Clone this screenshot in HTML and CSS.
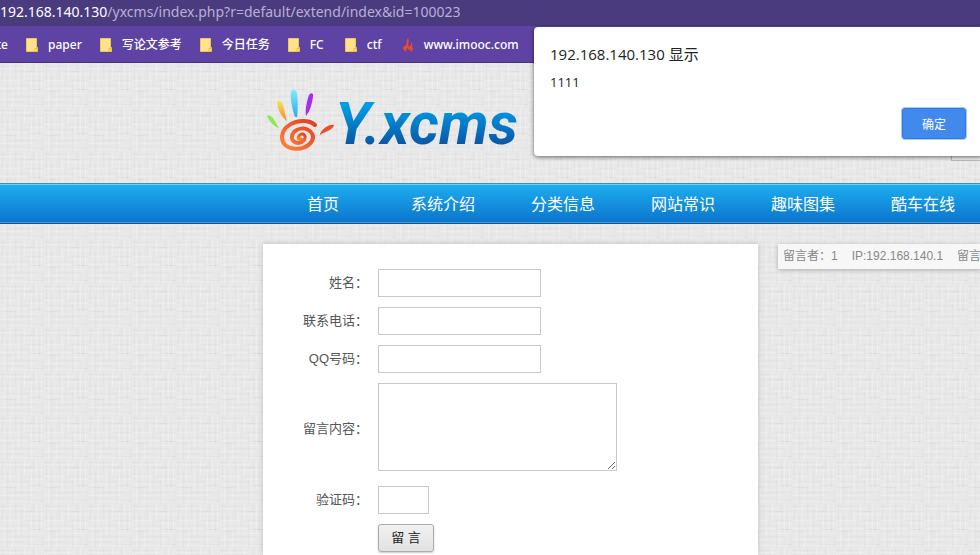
FILE: index.html
```html
<!DOCTYPE html>
<html lang="zh-CN">
<head>
<meta charset="utf-8">
<title>Yxcms</title>
<link rel="stylesheet" href="styles.css">
</head>
<body>
<svg class="defs" aria-hidden="true">
  <symbol id="folder" viewBox="0 0 12 14">
    <path d="M.5.5h10v9h1v4H.5z" fill="#ffe38c" stroke="#f0c94c"/>
    <path d="M9 13.500V10.500h2.500v3z" fill="#ffe38c" stroke="#e8bb3c"/>
  </symbol>
</svg>
<div class="chrome">
  <div class="address"><span class="host">192.168.140.130</span>/yxcms/index.php?r=default/extend/index&amp;id=100023</div>
  <nav class="bookmarks">
    <a class="cut" href="#">te</a>
    <a href="#"><svg class="icon"><use href="#folder"/></svg>paper</a>
    <a href="#"><svg class="icon"><use href="#folder"/></svg>写论文参考</a>
    <a href="#"><svg class="icon"><use href="#folder"/></svg>今日任务</a>
    <a href="#"><svg class="icon"><use href="#folder"/></svg>FC</a>
    <a href="#"><svg class="icon"><use href="#folder"/></svg>ctf</a>
    <a href="#"><svg class="icon" viewBox="0 0 12 14"><path d="M6 0c1 2 1 4 0 6l1 3 2-2V4c2 2 1 4 1 5l1 1c0 2-1 3-3 4l1-3-2 1-2-2-1 2 1 2C2 13 1 11 1 9c1 0 2-1 2-2l1 1C5 5 4 3 6 0z" fill="#f04a2c"/></svg>www.imooc.com</a>
  </nav>
</div>
<div class="site">
  <svg class="linen" aria-hidden="true">
    <pattern id="weave" width="44" height="44" patternUnits="userSpaceOnUse">
      <g stroke="#000" stroke-opacity=".025">
        <path d="M2.500 0v20M7.500 12v32M15.500 0v16M15.500 26v10M21.500 6v30M28.500 18v26M33.500 0v24M39.500 10v18M42.500 30v14"/>
        <path d="M0 3.500h22M10 8.500h34M0 14.500h14M24 17.500h20M4 22.500h26M0 28.500h16M30 26.500h14M8 33.500h30M0 39.500h24M28 41.500h16"/>
        <path d="M26 8.500h8M6 28.500h7M34 26.500h7"/>
      </g>
      <g stroke="#fff" stroke-opacity=".22">
        <path d="M4.500 10v34M10.500 0v24M12.500 28v16M18.500 8v24M24.500 0v18M31.500 10v34M36.500 0v30M41.500 4v22"/>
        <path d="M0 5.500h30M20 11.500h24M0 17.500h20M26 20.500h18M0 25.500h28M14 30.500h30M0 36.500h34M10 42.500h30"/>
      </g>
    </pattern>
    <rect width="100%" height="100%" fill="url(#weave)"/>
  </svg>
  <header class="header">
    <a class="logo" href="#">
      <svg class="hand" viewBox="0 0 68 64" aria-hidden="true">
        <defs>
          <linearGradient id="sun" x1="1" y1="0" x2="0" y2="1"><stop offset="0" stop-color="#e23c22"/><stop offset="1" stop-color="#ff8538"/></linearGradient>
          <linearGradient id="sky" x1="0" y1="0" x2="0" y2="1"><stop offset="0" stop-color="#7ceefa"/><stop offset="1" stop-color="#32a8ee"/></linearGradient>
          <linearGradient id="gold" x1="0" y1="0" x2="0" y2="1"><stop offset="0" stop-color="#f2e54c"/><stop offset="1" stop-color="#f58a38"/></linearGradient>
        </defs>
        <path d="M0 27c2-2 4 0 6 2l6 10c-4-1-9-5-12-12z" fill="#8fe94c"/>
        <path d="M10 13c2-2 5-1 6 3l4 16c-5-3-10-12-10-19z" fill="url(#gold)"/>
        <path d="M24 3c1-4 5-3 6 1 1 8 1 16 0 24h-2C25 20 23 9 24 3z" fill="url(#sky)"/>
        <path d="M42 6c2-3 5-2 4 2-1 7-3 14-7 19-1-7 1-15 3-21z" fill="#a52df0"/>
        <path d="M53 45c2-5 9-10 14-9 0 4-9 7-14 10z" fill="#e8502a"/>
        <g fill="none" stroke="url(#sun)" stroke-linecap="round">
          <path d="M48 36C40 28 16 32 15 48c0 15 24 15 30 4 5-10-10-17-18-9-7 8 4 15 10 8" stroke-width="4"/>
          <path d="M37 51c3-4-1-8-4-5-3 2-2 5 1 4" stroke-width="3"/>
        </g>
      </svg>
      <span class="wordmark">Y.xcms</span>
    </a>
    <input class="search" type="text" aria-label="搜索">
  </header>
  <nav class="menu">
    <a href="#">首页</a>
    <a href="#">系统介绍</a>
    <a href="#">分类信息</a>
    <a href="#">网站常识</a>
    <a href="#">趣味图集</a>
    <a href="#">酷车在线</a>
  </nav>
  <main class="content">
    <form class="panel">
      <label for="name">姓名：</label><input id="name" type="text">
      <label for="tel">联系电话：</label><input id="tel" type="text">
      <label for="qq">QQ号码：</label><input id="qq" type="text">
      <label for="message">留言内容：</label><textarea id="message"></textarea>
      <label for="code">验证码：</label><input id="code" class="short" type="text">
      <button class="submit" type="button">留 言</button>
    </form>
    <aside class="message"><span>留言者：1</span><span>IP:192.168.140.1</span><span>留言</span></aside>
  </main>
</div>
<div class="dialog" role="dialog" aria-labelledby="dialog-title">
  <h1 id="dialog-title">192.168.140.130 显示</h1>
  <p>1111</p>
  <button class="confirm" type="button">确定</button>
</div>
</body>
</html>
```
FILE: styles.css
```css
* { box-sizing: border-box; }

body {
  display: flex;
  flex-direction: column;
  position: relative;
  min-height: 100vh;
  margin: 0;
  overflow: hidden;
  font: 13px/20px "Liberation Sans", "Noto Sans CJK SC", sans-serif;
  color: #555;
}

a { color: inherit; text-decoration: none; }
.defs { position: absolute; width: 0; height: 0; }

/* Browser bars */
.chrome { font-family: "Noto Sans", "Noto Sans CJK SC", sans-serif; white-space: nowrap; }

.address {
  height: 26px;
  background: #4a3a7e;
  color: #b9b0d6;
  font-size: 14px;
  line-height: 24px;
}
.host { color: #fff; }

.bookmarks {
  display: flex;
  align-items: center;
  gap: 18px;
  height: 37px;
  padding-top: 1px;
  border-bottom: 1px solid #46327c;
  background: #5e43a5;
  color: #fff;
  font-size: 12px;
  font-weight: 500;
}
.bookmarks a { display: flex; align-items: center; gap: 10px; min-width: 39px; }
.bookmarks .cut { justify-content: flex-end; width: 8px; min-width: 0; }
.icon { width: 12px; height: 14px; }

/* Site */
.site {
  position: relative;
  z-index: 0;
  flex: 1;
  display: flex;
  flex-direction: column;
  background: #e8e8e8;
}

/* Linen texture behind the page, repeating every 44px */
.linen { position: absolute; z-index: -1; inset: 0; width: 100%; height: 100%; }

.header { display: flex; justify-content: space-between; height: 120px; padding-left: 267px; }
.logo { display: flex; align-items: flex-start; padding-top: 26px; }
.hand { width: 68px; height: 64px; }
.wordmark {
  padding-right: 8px;
  background: linear-gradient(#009ce8 25%, #0b4f9f 85%);
  background-clip: text;
  color: transparent;
  font: italic 700 59px/70px Roboto, sans-serif;
}
.search {
  width: 29px;
  height: 28px;
  margin-top: 70px;
  border: 1px solid #bbb;
  border-right: 0;
  background: #eee;
}

.menu {
  display: flex;
  height: 41px;
  padding-left: 263px;
  border-top: 1px solid #3b93b5;
  border-bottom: 1px solid #14568c;
  background: linear-gradient(#1eaef0, #0a74cb);
  box-shadow: inset 0 1px #6fd0ee, inset 0 -1px #3c9be0;
  color: #fff;
  font-size: 16px;
  line-height: 41px;
}
.menu a { flex: 0 0 120px; text-align: center; }

.content {
  flex: 1;
  display: grid;
  grid-template-columns: 495px 1fr;
  gap: 20px;
  padding: 20px 0 0 263px;
}

.panel {
  display: grid;
  grid-template-columns: 105px 1fr;
  grid-auto-rows: max-content;
  gap: 10px;
  align-items: center;
  justify-items: start;
  padding-top: 25px;
  background: #fff;
  box-shadow: 0 0 5px #bbb;
}
.panel label { justify-self: end; padding-bottom: 1px; }
.panel input, .panel textarea {
  width: 163px;
  height: 28px;
  margin: 0;
  border: 1px solid #c8c8c8;
  background: #fff;
}
.panel textarea { width: 239px; height: 88px; margin-bottom: 5px; }
.panel .short { width: 51px; }

.submit {
  grid-column: 2;
  width: 56px;
  height: 28px;
  padding: 0;
  border: 1px solid #aaa;
  border-radius: 3px;
  background: linear-gradient(#f1f1f1, #e2e2e2);
  box-shadow: 0 1px 2px #ccc;
  color: #222;
  font: inherit;
}

.message {
  align-self: start;
  display: flex;
  gap: 14px;
  height: 25px;
  padding-left: 5px;
  overflow: hidden;
  background: #f7f7f7;
  box-shadow: 0 1px 4px #aaa;
  color: #888;
  font-size: 12px;
  line-height: 24px;
  white-space: nowrap;
}
.message span { flex: none; }

/* Alert box */
.dialog {
  position: absolute;
  z-index: 1;
  top: 27px;
  right: -3px;
  left: 534px;
  display: flex;
  flex-direction: column;
  height: 129px;
  padding: 15px 16px 16px;
  border-radius: 4px;
  background: #fff;
  box-shadow: 0 1px 4px #0009;
  color: #222;
  font-family: "Open Sans", "Noto Sans CJK SC", sans-serif;
}
.dialog h1 { margin: 0; font-size: 15px; font-weight: 400; line-height: 24px; }
.dialog p { margin: 4px 0 0; line-height: 24px; }
.confirm {
  align-self: flex-end;
  width: 66px;
  height: 34px;
  margin-top: 13px;
  border: 1px solid #a9cdfa;
  border-radius: 4px;
  background: #4189ec;
  box-shadow: inset 0 0 0 1px #3079e4;
  color: #fff;
  font: 12px "Noto Sans CJK SC", sans-serif;
}
```
